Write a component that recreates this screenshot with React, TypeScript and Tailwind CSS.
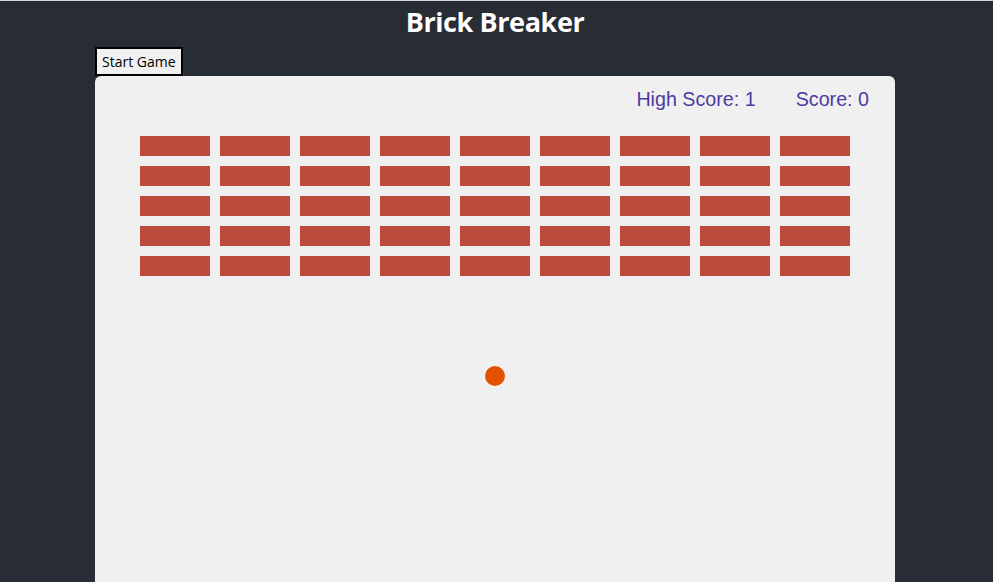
import React from 'react';

const ROWS = 5;
const COLS = 9;

const App = () => {
    const bricks = Array.from({ length: ROWS * COLS }, (_, i) => i);

    return (
        <div className="min-h-[582px] bg-[#282c34] border-t border-[#d4d4d4] flex flex-col items-center font-['Open_Sans','Noto_Sans',sans-serif]">
            {/* Title */}
            <h1 className="text-white text-[27px] tracking-[-0.4px] font-bold leading-[40px] mt-[1px] mb-[5px] ml-[-3px]">Brick Breaker</h1>

            <div className="w-[800px] flex flex-col ml-[-3px]">
                <div className="flex">
                    <button className="h-[29px] px-[5px] bg-[#f0f0f0] border-2 border-black text-[14px] text-black leading-none font-['Open_Sans',sans-serif]">
                        Start Game
                    </button>
                </div>

                {/* Game board */}
                <div className="relative h-[600px] bg-[#f0f0f0] rounded-t-[6px]">
                    <div className="flex justify-end gap-[40px] pr-[26px] pt-[11px] text-[19.7px] leading-[24px] text-[#4d3aa1] font-['Liberation_Sans',Arial,sans-serif]">
                        <span>High Score: 1</span>
                        <span>Score: 0</span>
                    </div>

                    <div className="grid grid-cols-[repeat(9,70px)] gap-[10px] px-[45px] mt-[25px]">
                        {bricks.map((b) => (
                            <div key={b} className="h-[20px] bg-[#bc4b3c]" />
                        ))}
                    </div>

                    {/* Ball */}
                    <div className="absolute left-[390px] top-[290px] w-[20px] h-[20px] rounded-full bg-[#e65100]" />
                </div>
            </div>
        </div>
    );
};

export default App;
